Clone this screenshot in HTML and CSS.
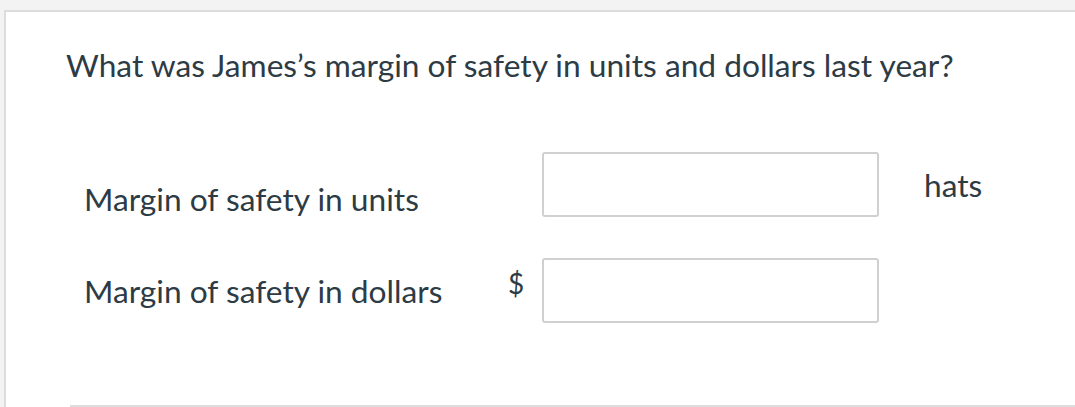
FILE: index.html
```html
<!DOCTYPE html>
<html>
<head>
<meta charset="utf-8">
<link rel="stylesheet" href="styles.css">
</head>
<body>
<div class="panel">
  <div class="content">
    <p class="question">What was James’s margin of safety in units and dollars last year?</p>
    <div class="rows">
      <div class="label label-units">Margin of safety in units</div>
      <div class="prefix"></div>
      <div class="field"><input type="text" class="input"></div>
      <div class="unit">hats</div>

      <div class="label label-dollars">Margin of safety in dollars</div>
      <div class="prefix">$</div>
      <div class="field"><input type="text" class="input"></div>
      <div class="unit"></div>
    </div>
  </div>
  <div class="divider"></div>
</div>
</body>
</html>
```

FILE: styles.css
```css
html, body {
  margin: 0;
  padding: 0;
  height: 100%;
  overflow: hidden;
}
body {
  background: #f3f3f3;
  font-family: Lato, "Open Sans", sans-serif;
  color: #2d3b45;
}
.panel {
  margin-top: 10px;
  margin-left: 4px;
  border-top: 2px solid #dddddd;
  border-left: 2px solid #dddddd;
  background: #ffffff;
  height: 400px;
}
.content {
  padding-left: 60px;
  padding-top: 34px;
}
.question {
  margin: 0;
  font-size: 31.7px;
  line-height: 38px;
  height: 38px;
}
.rows {
  display: grid;
  grid-template-columns: 424px 34px 337px auto;
  grid-auto-rows: 65px;
  row-gap: 41px;
  margin-top: 68px;
  margin-left: 18px;
}
.label {
  font-size: 31.7px;
  line-height: 38px;
  white-space: nowrap;
}
.label-units {
  padding-top: 28px;
}
.label-dollars {
  padding-top: 14px;
}
.prefix {
  font-size: 28px;
  line-height: 34px;
  padding-top: 8px;
}
.field {
  display: flex;
}
.input {
  box-sizing: border-box;
  width: 337px;
  height: 65px;
  margin: 0;
  border: 2px solid #d0d0d0;
  border-radius: 3px;
  background: #ffffff;
}
.unit {
  padding-left: 45px;
  padding-top: 14px;
  font-size: 31.7px;
  line-height: 38px;
}
.divider {
  margin-top: 82px;
  margin-left: 64px;
  border-top: 2px solid #dddddd;
}
```
